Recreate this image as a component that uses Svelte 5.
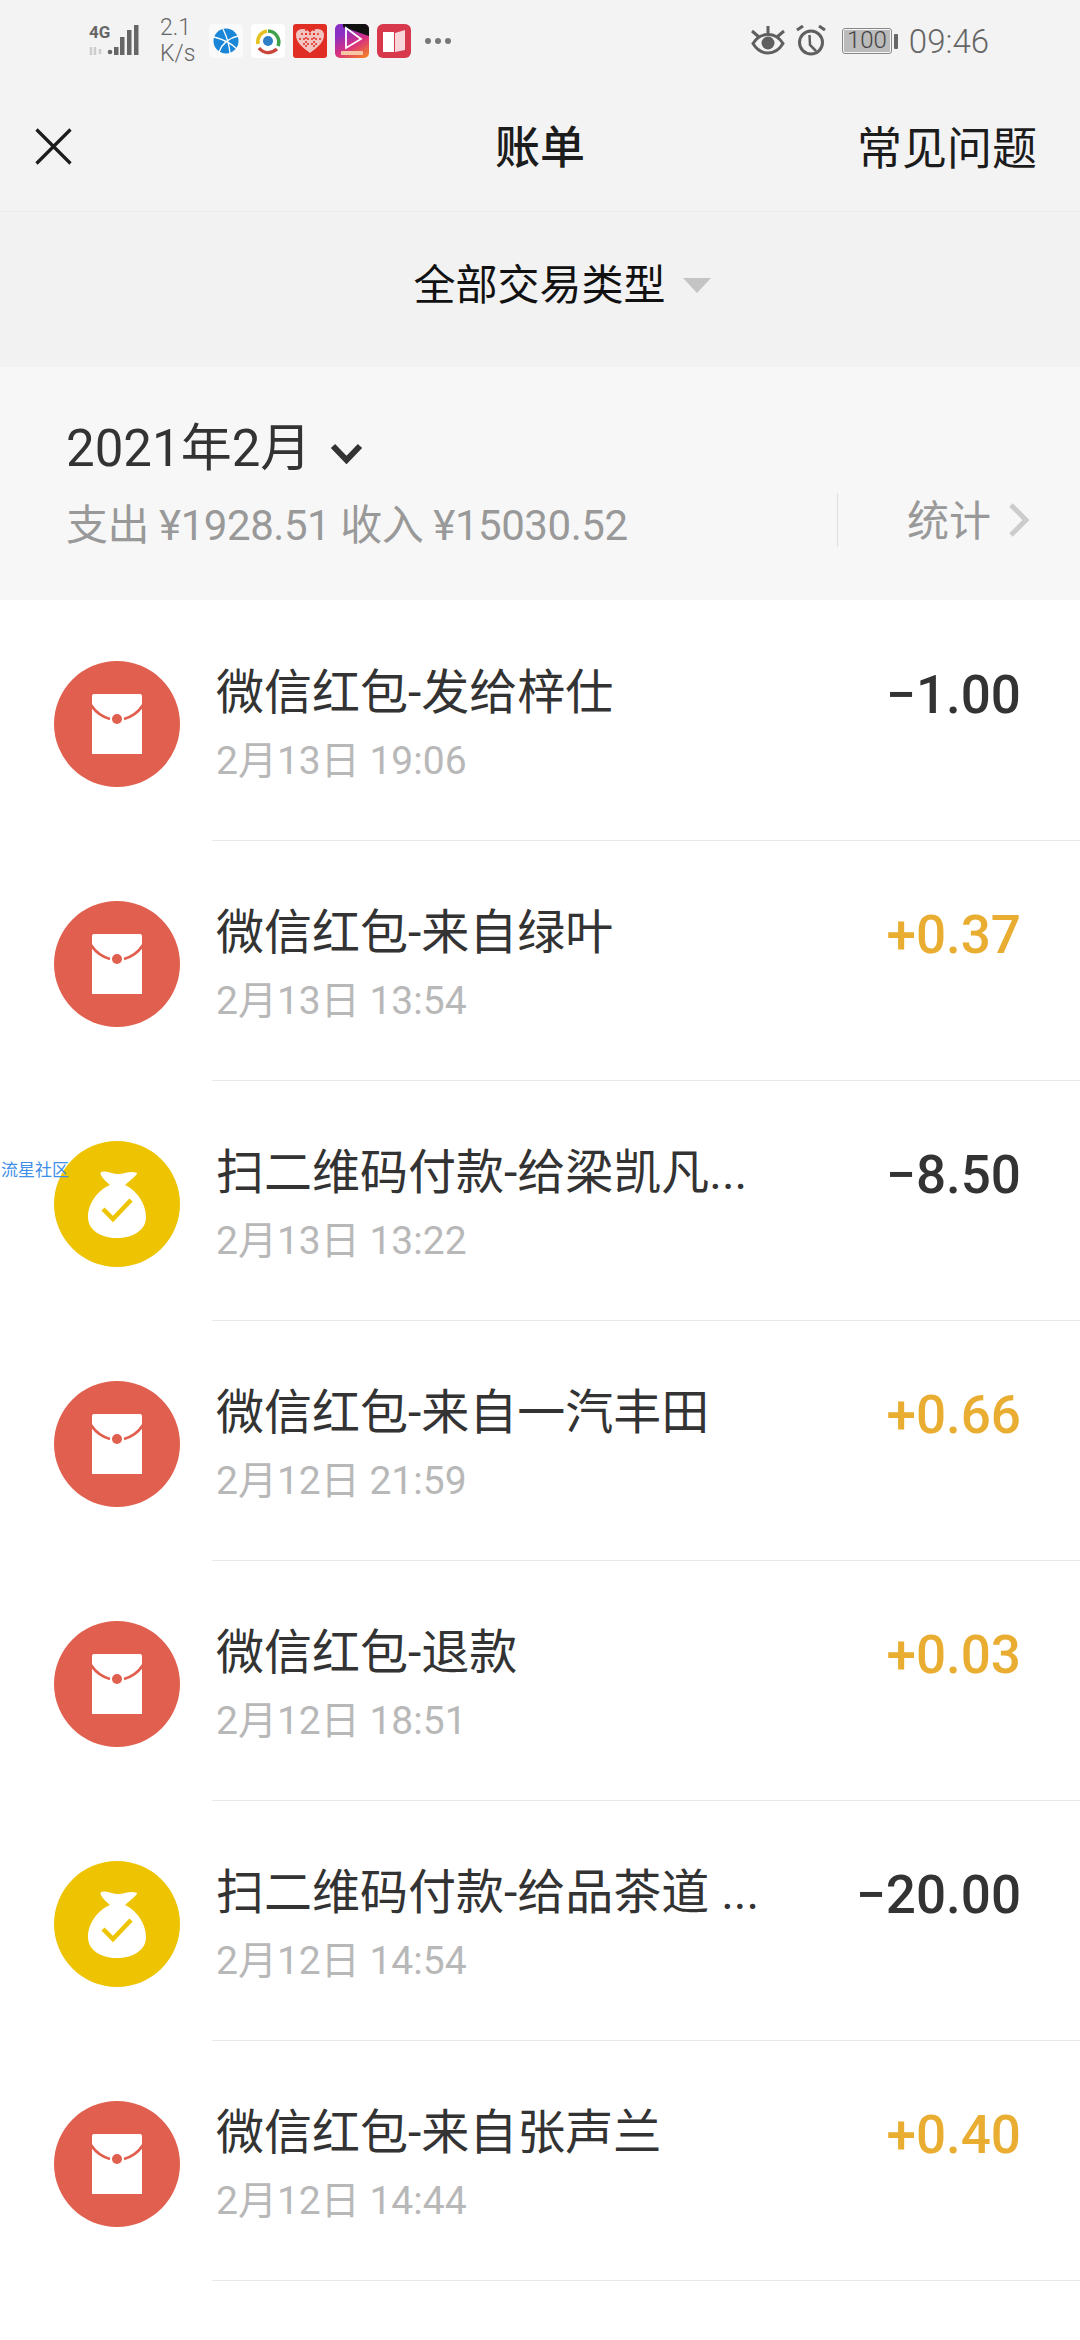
<script>
  const bills = [
    { kind: 'red', title: '微信红包-发给梓仕', date: '2月13日 19:06', amount: '−1.00' },
    { kind: 'red', title: '微信红包-来自绿叶', date: '2月13日 13:54', amount: '+0.37' },
    { kind: 'bag', title: '扫二维码付款-给梁凯凡...', date: '2月13日 13:22', amount: '−8.50' },
    { kind: 'red', title: '微信红包-来自一汽丰田', date: '2月12日 21:59', amount: '+0.66' },
    { kind: 'red', title: '微信红包-退款', date: '2月12日 18:51', amount: '+0.03' },
    { kind: 'bag', title: '扫二维码付款-给品茶道 ...', date: '2月12日 14:54', amount: '−20.00' },
    { kind: 'red', title: '微信红包-来自张声兰', date: '2月12日 14:44', amount: '+0.40' }
  ];
</script>

<div class="page">
  <div class="status">
    <div class="status-left">
      <svg class="signal" width="50" height="40" viewBox="0 -8 50 40">
        <text x="0" y="13" class="net">4G</text>
        <path d="M2 30v-8M6 30v-8M11 24v5" stroke="#ccc" stroke-width="2.500" fill="none" />
        <circle cx="21" cy="27" r="2.300" fill="#666" />
        <rect x="25" y="22" width="4.500" height="8" fill="#666" />
        <rect x="31" y="12" width="4.500" height="18" fill="#666" />
        <rect x="38" y="5" width="4.500" height="25" fill="#666" />
        <rect x="45" y="0" width="4.500" height="30" fill="#666" />
      </svg>
      <div class="speed"><span>2.1</span><span>K/s</span></div>
      <div class="apps">
        <svg width="34" height="34" viewBox="0 0 34 34">
          <rect width="34" height="34" rx="4" fill="#fafafa" />
          <circle cx="17" cy="17" r="12.500" fill="#1a86d8" />
          <path d="M5 13c8 2 17 6 23 12M29 12C20 14 13 20 10 28M14 5c3 6 6 14 7 24" stroke="#fff" stroke-width="1.300" fill="none" />
        </svg>
        <svg width="34" height="34" viewBox="0 0 34 34">
          <rect width="34" height="34" rx="4" fill="#fff" />
          <path d="M7 20a11 11 0 0 1 9-13" stroke="#e6c11f" stroke-width="3.500" fill="none" />
          <path d="M17 7a11 11 0 0 1 10 15" stroke="#3fa14a" stroke-width="3.500" fill="none" />
          <path d="M8 24c5 6 12 6 18 1" stroke="#c9463c" stroke-width="3.500" fill="none" />
          <circle cx="17" cy="17" r="5" fill="#2f7fc4" />
        </svg>
        <svg width="34" height="34" viewBox="0 0 34 34">
          <rect width="34" height="34" rx="3" fill="#e02e24" />
          <path d="M17 29C9 23 3 18 3 11c0-4 3-6 7-6 3 0 5 1 7 4 2-3 4-4 7-4 4 0 7 2 7 6 0 7-6 12-14 18z" fill="#f3c4bf" />
          <path d="M8 10h18M6 15h22M10 20h14M13 5v20M21 5v20" stroke="#e02e24" stroke-width="1.500" stroke-dasharray="2 2" />
        </svg>
        <svg width="34" height="34" viewBox="0 0 34 34">
          <defs>
            <linearGradient id="sv" x1="0.2" y1="0" x2="0.8" y2="1">
              <stop offset="0.2" stop-color="#8a2fc4" />
              <stop offset="0.6" stop-color="#d8307f" />
              <stop offset="1" stop-color="#f37a2b" />
            </linearGradient>
          </defs>
          <rect width="34" height="34" rx="5" fill="url(#sv)" />
          <path d="M8 0h21a5 5 0 0 1 5 5v7L8 3z" fill="#111" />
          <path d="M11 4l15 11-15 9z" fill="none" stroke="#fff" stroke-width="1.800" />
          <rect x="6" y="27" width="22" height="4" fill="#f6c7a5" />
        </svg>
        <svg width="34" height="34" viewBox="0 0 34 34">
          <rect width="34" height="34" rx="6" fill="#d8384c" />
          <path d="M6 8h11v20H6z" fill="#fff" />
          <path d="M18 9l10-3v20l-10 2z" fill="#f7d5d9" />
        </svg>
      </div>
      <div class="more"><i></i><i></i><i></i></div>
    </div>
    <div class="status-right">
      <svg width="34" height="32" viewBox="0 0 34 32">
        <path d="M2 18.500C6 12 11 9.500 17 9.500s11 2.500 15 9c-4 6.500-9 9.500-15 9.500s-11-3-15-9.500z" fill="none" stroke="#5f5f5f" stroke-width="3" />
        <circle cx="17" cy="18" r="6.500" fill="#5f5f5f" />
        <path d="M17 1v8M1 6l7 6M33 6l-7 6" stroke="#5f5f5f" stroke-width="3" />
      </svg>
      <svg width="31" height="32" viewBox="0 0 31 32">
        <circle cx="15" cy="17.500" r="11.500" fill="none" stroke="#5f5f5f" stroke-width="3" />
        <path d="M13.500 10l.500 10 6 6" fill="none" stroke="#5f5f5f" stroke-width="2.500" />
        <path d="M1 5l6-4M29 5l-6-4" stroke="#5f5f5f" stroke-width="3" />
      </svg>
      <div class="battery">
        <div class="cell"><span>100</span></div>
        <i></i>
      </div>
      <span class="clock">09:46</span>
    </div>
  </div>

  <div class="nav">
    <svg class="close" width="37" height="37" viewBox="0 0 37 37">
      <path d="M1.500 1.500l34 34M35.500 1.500l-34 34" stroke="#1c1c1c" stroke-width="3.200" fill="none" />
    </svg>
    <div class="nav-title">账单</div>
    <div class="nav-link">常见问题</div>
  </div>

  <div class="filter">
    <span>全部交易类型</span>
    <i class="caret"></i>
  </div>

  <div class="month">
    <div class="month-left">
      <div class="month-name">
        <span>2021年2月</span>
        <svg width="33" height="21" viewBox="0 0 33 21">
          <path d="M3 3l13.500 14L30 3" fill="none" stroke="#333" stroke-width="6" />
        </svg>
      </div>
      <div class="totals">支出 ¥1928.51 收入 ¥15030.52</div>
    </div>
    <div class="stats">
      <span>统计</span>
      <svg width="21" height="34" viewBox="0 0 21 34">
        <path d="M3 2l15 15L3 32" fill="none" stroke="#ccc" stroke-width="5" />
      </svg>
    </div>
  </div>

  <div class="watermark">流星社区</div>

  <div class="list">
    {#each bills as bill}
      <div class="row">
        <div class="icon-col">
          <div class="icon {bill.kind}">
            {#if bill.kind === 'red'}
              <svg width="52" height="62" viewBox="0 0 52 62">
                <path d="M3 1h46a2 2 0 0 1 2 2v58H1V3a2 2 0 0 1 2-2z" fill="#fff" />
                <path d="M0 12c5 8 12 12 19 14M52 12c-5 8-12 12-19 14" fill="none" stroke="#e15f4e" stroke-width="2.800" />
                <circle cx="26" cy="26" r="5" fill="#e15f4e" />
              </svg>
            {:else}
              <svg width="58" height="68" viewBox="0 0 58 68">
                <path d="M22 15C10 20 0 33 0 47c0 14 14 21 29 21s29-7 29-21c0-14-10-27-21-32 7-6 13-11 12-12-6-3-13 1-19 1S18 0 13 2c-2 2 3 8 9 13z" fill="#fff" />
                <path d="M15 39l10 10 18-19" fill="none" stroke="#eec402" stroke-width="4.500" />
              </svg>
            {/if}
          </div>
        </div>
        <div class="row-body">
          <div class="row-text">
            <div class="row-title">{bill.title}</div>
            <div class="row-date">{bill.date}</div>
          </div>
          <div class="amount" class:income={bill.amount.startsWith('+')}>{bill.amount}</div>
        </div>
      </div>
    {/each}
  </div>
</div>

<style>
  :global(body) {
    background: #fff;
  }
  .page {
    position: relative;
    width: 1080px;
    height: 2340px;
    overflow: hidden;
    background: #fff;
    font-family: Roboto, "Noto Sans CJK SC", sans-serif;
  }
  .status {
    height: 82px;
    box-sizing: border-box;
    padding: 0 91px 0 89px;
    display: flex;
    justify-content: space-between;
    align-items: center;
    background: #f3f3f3;
    color: #666;
  }
  .status-left,
  .status-right {
    display: flex;
    align-items: center;
  }
  .signal {
    margin-bottom: 8px;
  }
  .net {
    font-size: 17px;
    font-weight: 700;
    fill: #666;
  }
  .speed {
    margin-left: 21px;
    display: flex;
    flex-direction: column;
    font-size: 23px;
    line-height: 26px;
    font-weight: 300;
    width: 49px;
  }
  .apps {
    display: flex;
    gap: 8px;
  }
  .more {
    margin-left: 14px;
    display: flex;
    gap: 4px;
  }
  .more i {
    width: 6px;
    height: 6px;
    border-radius: 50%;
    background: #777;
  }
  .status-right {
    gap: 11px;
  }
  .battery {
    display: flex;
    align-items: center;
    gap: 2px;
    margin-left: 4px;
  }
  .cell {
    width: 50px;
    height: 26px;
    box-sizing: border-box;
    border: 1.500px solid #888;
    border-radius: 3px;
    padding: 1px;
    background: #bbb content-box;
    font-size: 24px;
    font-weight: 300;
    line-height: 21px;
    text-align: center;
    color: #444;
  }
  .battery i {
    width: 4px;
    height: 15px;
    border-radius: 1px;
    background: #666;
  }
  .clock {
    font-size: 33px;
    font-weight: 300;
  }
  .nav {
    height: 130px;
    box-sizing: border-box;
    position: relative;
    display: flex;
    align-items: center;
    justify-content: center;
    background: #f3f3f3;
    border-bottom: 1px solid #ececec;
    color: #1c1c1c;
    font-size: 45px;
  }
  .close {
    position: absolute;
    left: 35px;
    top: 46px;
  }
  .nav-title {
    font-weight: 500;
    margin-top: -4px;
  }
  .nav-link {
    position: absolute;
    right: 43px;
    top: 39px;
    line-height: 58px;
  }
  .filter {
    height: 155px;
    box-sizing: border-box;
    padding: 0 0 16px 44px;
    display: flex;
    align-items: center;
    justify-content: center;
    gap: 17px;
    background: #f2f2f2;
    color: #111;
    font-size: 42px;
  }
  .caret {
    width: 0;
    height: 0;
    border-left: 14px solid transparent;
    border-right: 14px solid transparent;
    border-top: 15px solid #c4c4c4;
    margin-top: 8px;
  }
  .month {
    height: 233px;
    box-sizing: border-box;
    padding: 50px 51px 0 66px;
    display: flex;
    justify-content: space-between;
    background: #f7f7f7;
  }
  .month-name {
    display: flex;
    align-items: center;
    gap: 19px;
    font-size: 51px;
    line-height: 64px;
    color: #333;
  }
  .month-name svg {
    margin-top: 8px;
  }
  .totals {
    margin-top: 20px;
    font-size: 42px;
    line-height: 50px;
    letter-spacing: -0.45px;
    color: #999;
  }
  .stats {
    height: 54px;
    margin-top: 76px;
    padding-left: 69px;
    display: flex;
    align-items: center;
    gap: 17px;
    border-left: 1px solid #e0e0e0;
    font-size: 42px;
    color: #999;
  }
  .stats span {
    margin-bottom: 6px;
  }
  .watermark {
    position: absolute;
    left: 1px;
    top: 1160px;
    font-size: 17px;
    line-height: 20px;
    color: #3f8fe8;
  }
  .list {
    padding-top: 1px;
  }
  .row {
    height: 240px;
    display: flex;
  }
  .icon-col {
    width: 212px;
    padding: 60px 0 0 54px;
    box-sizing: border-box;
  }
  .icon {
    width: 126px;
    height: 126px;
    border-radius: 50%;
    display: flex;
    align-items: center;
    justify-content: center;
  }
  .icon.red {
    background: #e15f4e;
  }
  .icon.bag {
    background: #eec402;
  }
  .row-body {
    flex: 1;
    display: flex;
    justify-content: space-between;
    box-sizing: border-box;
    padding: 58px 59px 0 4px;
    border-bottom: 1px solid #e8e8e8;
  }
  .row-title {
    font-size: 48px;
    line-height: 68px;
    color: #333;
  }
  .row-date {
    margin-top: 9px;
    font-size: 39px;
    line-height: 50px;
    color: #b8b8b8;
  }
  .amount {
    margin-top: 2px;
    font-size: 53px;
    line-height: 68px;
    font-weight: 500;
    color: #333;
  }
  .amount.income {
    color: #e9ad32;
  }
</style>
